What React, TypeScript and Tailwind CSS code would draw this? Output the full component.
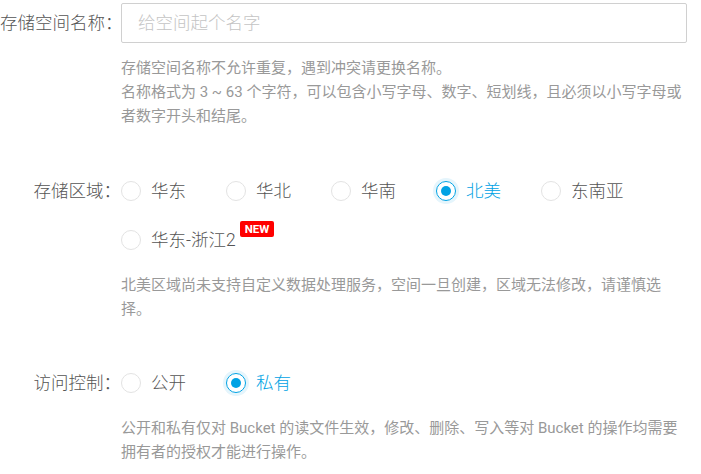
import React from "react";

const FONT = { fontFamily: 'Roboto, "Noto Sans CJK SC", sans-serif' };

function Radio({ label, checked, badge }: { label: string; checked?: boolean; badge?: boolean }) {
  return (
    <div className="flex items-center min-w-[105px] h-[24px]">
      {checked ? (
        <span className="w-[20px] h-[20px] rounded-full border-[1.5px] border-[#00a2e4] flex items-center justify-center shadow-[0_0_0_3px_#e5f5fc] shrink-0">
          <span className="w-[10px] h-[10px] rounded-full bg-[#00a2e4]" />
        </span>
      ) : (
        <span className="w-[20px] h-[20px] rounded-full border border-[#e3e3e3] bg-white shrink-0" />
      )}
      <span className={`ml-[10px] text-[17.5px] font-light ${checked ? "text-[#00a2e4]" : "text-[#555]"}`}>{label}</span>
      {badge && (
        <span className="self-start -mt-[7px] ml-[4px] bg-[#ff0000] text-white text-[11.5px] font-bold leading-[16px] h-[16px] px-[5px] rounded-[2px]">
          NEW
        </span>
      )}
    </div>
  );
}

export default function App() {
  return (
    <div className="w-[701px] h-[474px] bg-white overflow-hidden" style={FONT}>
      {/* name */}
      <div className="flex pt-[3px]">
        <div className="w-[121px] shrink-0 text-right text-[17.5px] font-light leading-[40px] text-[#555] whitespace-nowrap">存储空间名称：</div>
        <div className="w-[566px]">
          <div className="h-[40px] border border-[#d0d0d0] rounded-[2px] flex items-center pl-[16px] text-[17.5px] font-light text-[#c4c4c4]">
            给空间起个名字
          </div>
          <div className="mt-[13px] text-[15px] leading-[24px] text-[#999]">
            <div>存储空间名称不允许重复，遇到冲突请更换名称。</div>
            <div>名称格式为 3 ~ 63 个字符，可以包含小写字母、数字、短划线，且必须以小写字母或者数字开头和结尾。</div>
          </div>
        </div>
      </div>

      {/* region */}
      <div className="flex mt-[51px]">
        <div className="w-[121px] shrink-0 text-right text-[17.5px] font-light leading-[24px] text-[#555]">存储区域：</div>
        <div className="w-[566px]">
          <div className="flex flex-wrap gap-y-[25px]">
            <Radio label="华东" />
            <Radio label="华北" />
            <Radio label="华南" />
            <Radio label="北美" checked />
            <Radio label="东南亚" />
            <Radio label="华东-浙江2" badge />
          </div>
          <div className="mt-[21px] text-[15px] leading-[24px] text-[#999]">
            北美区域尚未支持自定义数据处理服务，空间一旦创建，区域无法修改，请谨慎选择。
          </div>
        </div>
      </div>

      {/* access */}
      <div className="flex mt-[50px]">
        <div className="w-[121px] shrink-0 text-right text-[17.5px] font-light leading-[24px] text-[#555]">访问控制：</div>
        <div className="w-[566px]">
          <div className="flex flex-wrap">
            <Radio label="公开" />
            <Radio label="私有" checked />
          </div>
          <div className="mt-[21px] text-[15px] leading-[24px] text-[#999]">
            公开和私有仅对 Bucket 的读文件生效，修改、删除、写入等对 Bucket 的操作均需要拥有者的授权才能进行操作。
          </div>
        </div>
      </div>
    </div>
  );
}
